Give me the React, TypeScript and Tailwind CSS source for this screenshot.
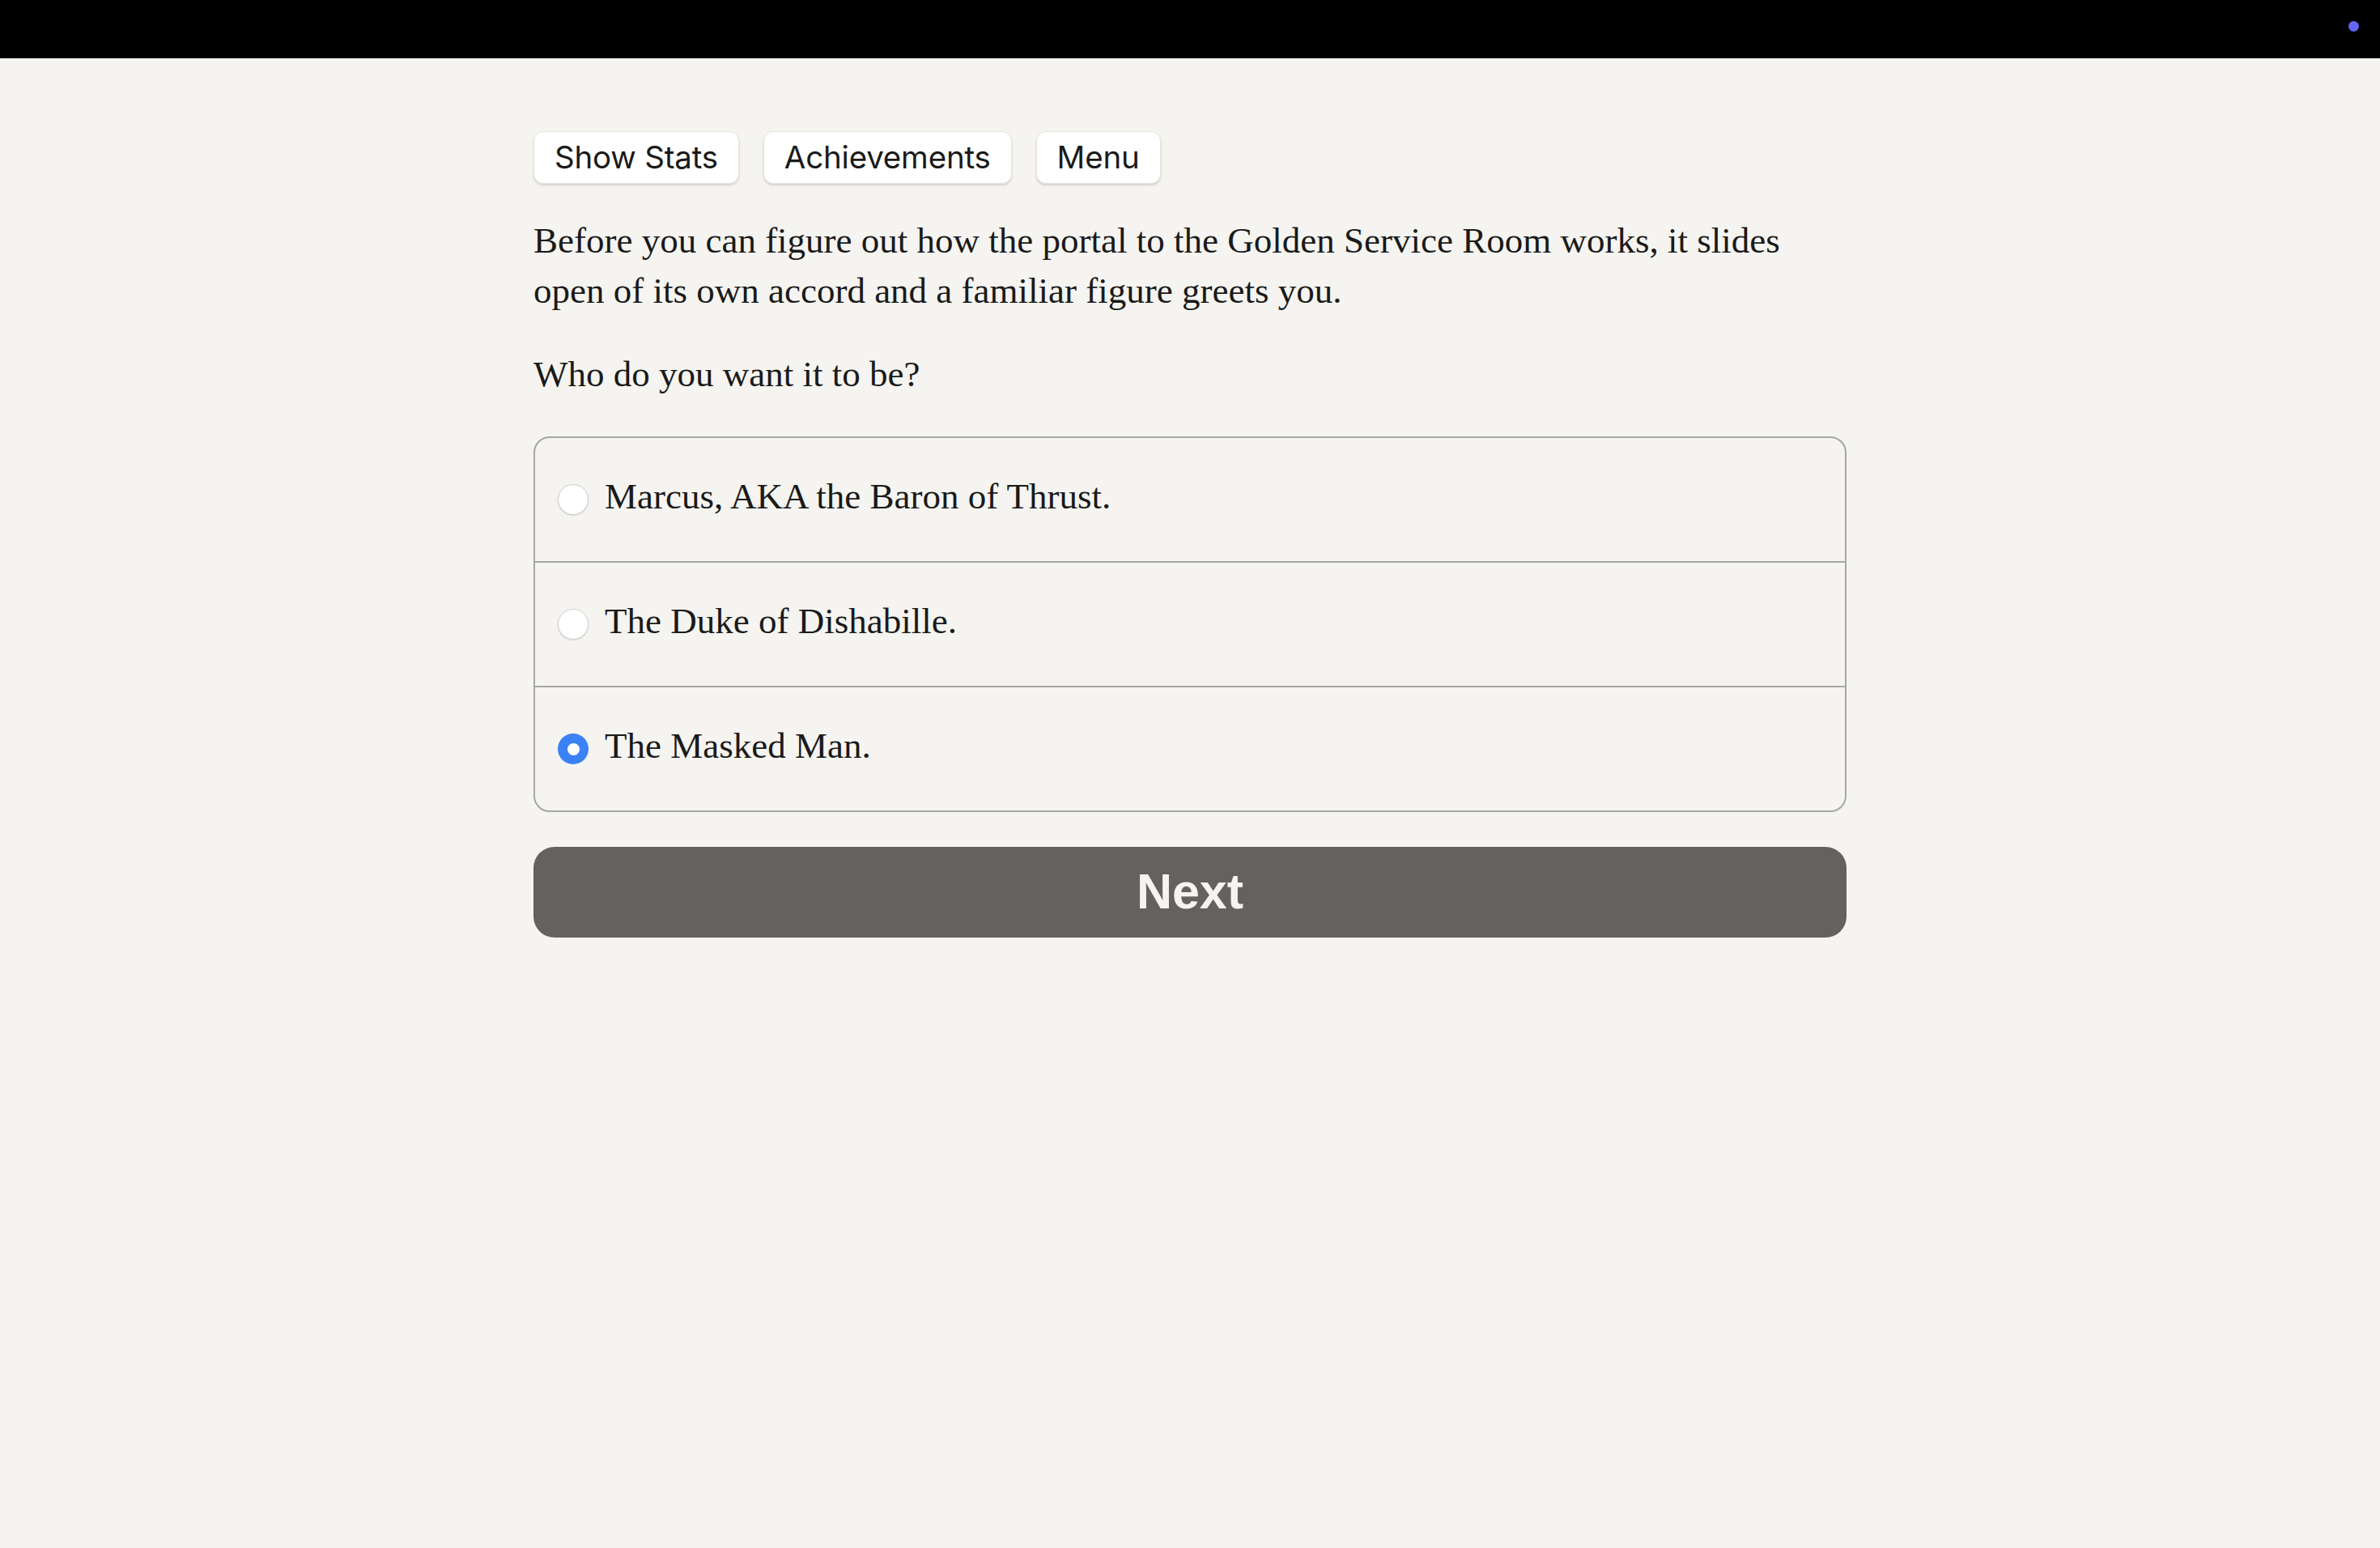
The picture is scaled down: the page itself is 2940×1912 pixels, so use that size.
import React, { useState } from 'react';

const options = [
  'Marcus, AKA the Baron of Thrust.',
  'The Duke of Dishabille.',
  'The Masked Man.',
];

const TopButton: React.FC<{ label: string }> = ({ label }) => (
  <button className="h-[65px] px-[25px] flex items-center bg-white rounded-[12px] border border-[#e4e3df] shadow-[0_2px_3px_rgba(0,0,0,0.14)] text-[38.5px] text-[#1a1a1a] font-['Inter',sans-serif] tracking-[-0.2px]">
    {label}
  </button>
);

const App: React.FC = () => {
  const [choice, setChoice] = useState(2);

  return (
    <div className="min-h-[1912px] bg-[#f5f4f0]">
      <div className="h-[72px] bg-black flex justify-end items-start pt-[26px] pr-[26px]">
        <div className="w-[13px] h-[13px] rounded-full bg-[#6366f1]"></div>
      </div>

      <div className="w-[1622px] mx-auto pt-[90px] font-['Liberation_Serif',serif] text-[#1a1a1a]">
        <div className="flex gap-[30px]">
          <TopButton label="Show Stats" />
          <TopButton label="Achievements" />
          <TopButton label="Menu" />
        </div>

        <p className="mt-[39px] text-[45px] leading-[62px]">
          Before you can figure out how the portal to the Golden Service Room works, it slides open of its own accord and a familiar figure greets you.
        </p>
        <p className="mt-[41px] text-[45px] leading-[62px]">Who do you want it to be?</p>

        <div className="mt-[46px] border-[2.5px] border-[#a6a6aa] rounded-[20px] overflow-hidden">
          {options.map((opt, i) => (
            <label
              key={opt}
              onClick={() => setChoice(i)}
              className={`flex items-center pl-[28px] cursor-pointer ${i > 0 ? 'h-[154px] border-t-[2.5px] border-[#a6a6aa]' : 'h-[152px]'}`}
            >
              {choice === i ? (
                <span className="w-[38px] h-[38px] rounded-full bg-[#3b82f6] flex items-center justify-center shrink-0">
                  <span className="w-[15px] h-[15px] rounded-full bg-white"></span>
                </span>
              ) : (
                <span className="w-[38px] h-[38px] rounded-full bg-white border-[1.5px] border-[#d0d0d0] shadow-[0_1px_2px_rgba(0,0,0,0.12)] shrink-0"></span>
              )}
              <span className="ml-[20px] pb-[8px] text-[45px] leading-[54px]">{opt}</span>
            </label>
          ))}
        </div>

        <button className="mt-[43px] w-full h-[112px] rounded-[26px] bg-[#636260] text-[#f5f4f0] text-[61px] font-bold font-['Liberation_Sans',sans-serif] flex items-center justify-center">
          Next
        </button>
      </div>
    </div>
  );
};

export default App;
